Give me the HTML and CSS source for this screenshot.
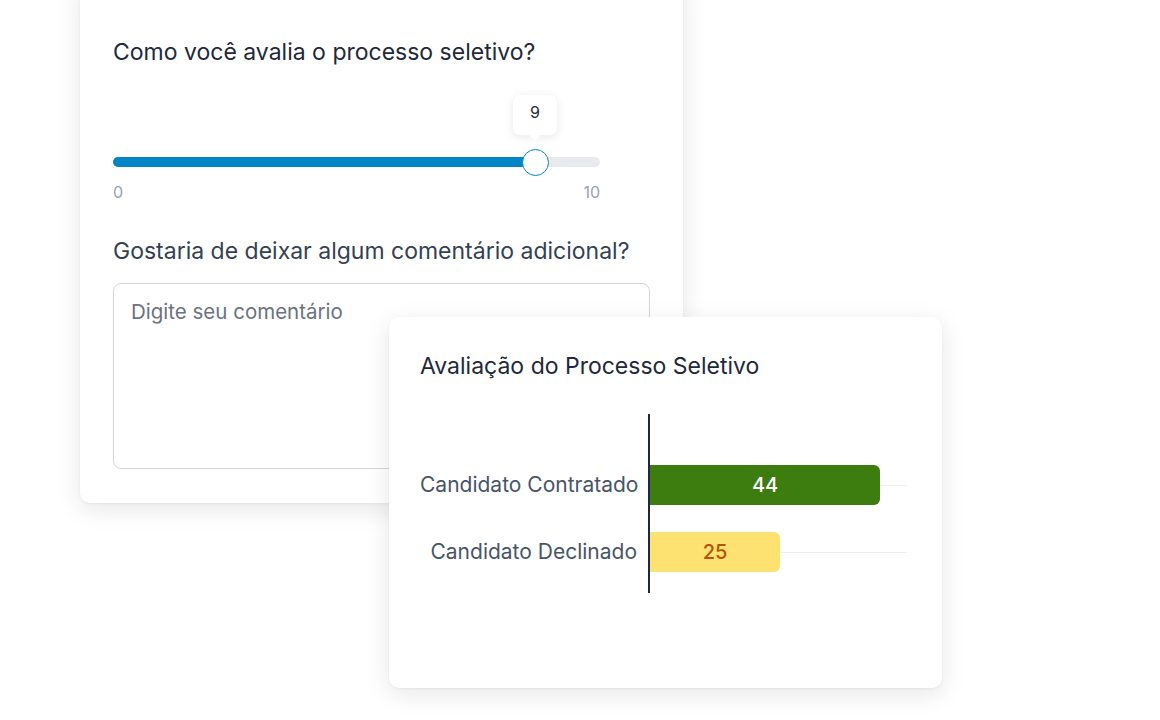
FILE: index.html
```html
<!DOCTYPE html>
<html lang="pt-BR">

<head>
    <meta charset="UTF-8">
    <meta name="viewport" content="width=device-width, initial-scale=1.0">
    <title>Avaliação do Processo Seletivo</title>
    <link rel="stylesheet" href="styles.css">
</head>

<body>
    <div class="stage">
        <!-- Survey card -->
        <div class="card survey">
            <h2 class="question">Como você avalia o processo seletivo?</h2>

            <div class="slider">
                <div class="track">
                    <div class="fill" style="width: 422px"></div>
                    <div class="thumb" style="left: 422px">
                        <div class="bubble">9</div>
                    </div>
                </div>
                <div class="scale">
                    <span>0</span>
                    <span>10</span>
                </div>
            </div>

            <h2 class="question second">Gostaria de deixar algum comentário adicional?</h2>
            <textarea class="comment" placeholder="Digite seu comentário"></textarea>
        </div>

        <!-- Chart card -->
        <div class="card chart-card">
            <h2 class="chart-title">Avaliação do Processo Seletivo</h2>

            <div class="chart">
                <div class="labels">
                    <div class="label">Candidato Contratado</div>
                    <div class="label">Candidato Declinado</div>
                </div>
                <div class="axis"></div>
                <div class="plot">
                    <div class="row">
                        <div class="bar green" style="width: 230px">44</div>
                    </div>
                    <div class="row">
                        <div class="bar yellow" style="width: 130px">25</div>
                    </div>
                </div>
            </div>
        </div>
    </div>
</body>

</html>
```

FILE: styles.css
```css
/* Page */

body {
    margin: 0;
    padding: 0;
    background: #ffffff;
    font-family: Inter, "Noto Sans", sans-serif;
    color: #1e293b;
}

.stage {
    position: relative;
    width: 1160px;
    height: 720px;
    overflow: hidden;
}

/* Cards */

.card {
    position: absolute;
    background: #ffffff;
    border-radius: 10px;
    box-shadow: 0 6px 24px rgba(15, 23, 42, 0.10), 0 1px 3px rgba(15, 23, 42, 0.05);
    box-sizing: border-box;
}

.survey {
    left: 80px;
    top: -20px;
    width: 603px;
    padding: 56px 33px 34px;
}

.question {
    margin: 0;
    font-size: 23px;
    line-height: 32px;
    font-weight: 400;
    color: #1e293b;
    white-space: nowrap;
}

.question.second {
    margin-top: 32px;
    color: #334155;
}

/* Slider */

.slider {
    width: 487px;
    margin-top: 89px;
}

.track {
    position: relative;
    height: 10px;
    margin: 8px 0;
    border-radius: 5px;
    background: #e8eaee;
}

.fill {
    height: 10px;
    border-radius: 5px;
    background: #0284c7;
}

.thumb {
    position: absolute;
    top: 50%;
    width: 27px;
    height: 27px;
    margin: -13.5px 0 0 -13.5px;
    border-radius: 50%;
    background: #ffffff;
    border: 1.5px solid #0284c7;
    box-sizing: border-box;
}

.bubble {
    position: absolute;
    left: 50%;
    bottom: 40px;
    width: 44px;
    height: 40px;
    margin-left: -22px;
    border-radius: 7px;
    background: #ffffff;
    box-shadow: 0 2px 10px rgba(15, 23, 42, 0.10);
    font-size: 16px;
    line-height: 34px;
    text-align: center;
    color: #1e293b;
}

.bubble::after {
    content: "";
    position: absolute;
    left: 50%;
    bottom: -6px;
    margin-left: -6px;
    border-left: 6px solid transparent;
    border-right: 6px solid transparent;
    border-top: 6px solid #ffffff;
}

.scale {
    display: flex;
    justify-content: space-between;
    margin-top: 14px;
    font-size: 16px;
    line-height: 22px;
    color: #94a3b8;
}

/* Comment box */

.comment {
    display: block;
    width: 537px;
    height: 186px;
    margin-top: 16px;
    padding: 15px 17px;
    box-sizing: border-box;
    border: 1px solid #d1d5db;
    border-radius: 8px;
    font-family: Inter, "Noto Sans", sans-serif;
    font-size: 20.5px;
    line-height: 26px;
    resize: none;
    outline: none;
}

.comment::placeholder {
    color: #6b7280;
}

/* Chart card */

.chart-card {
    left: 389px;
    top: 317px;
    width: 553px;
    height: 371px;
    padding: 33px 31px;
}

.chart-title {
    margin: 0;
    font-size: 23px;
    line-height: 32px;
    font-weight: 400;
    color: #1e293b;
}

.chart {
    display: flex;
    margin-top: 32px;
    height: 179px;
}

.labels {
    width: 217px;
    margin-right: 11px;
    padding-top: 51px;
    display: flex;
    flex-direction: column;
    gap: 27px;
}

.label {
    height: 40px;
    line-height: 40px;
    text-align: right;
    font-size: 21px;
    color: #475569;
    white-space: nowrap;
}

.axis {
    width: 2px;
    background: #1e293b;
}

.plot {
    width: 257px;
    padding-top: 51px;
    display: flex;
    flex-direction: column;
    gap: 27px;
}

.row {
    position: relative;
    height: 40px;
}

.row::before {
    content: "";
    position: absolute;
    left: 0;
    right: 0;
    top: 20px;
    height: 1px;
    background: #eceef2;
}

.bar {
    position: relative;
    height: 40px;
    line-height: 40px;
    text-align: center;
    font-size: 20px;
    font-weight: 500;
    border-radius: 0 6px 6px 0;
}

.green {
    background: #3d7c0f;
    color: #ffffff;
}

.yellow {
    background: #fde272;
    color: #b45309;
}
```
